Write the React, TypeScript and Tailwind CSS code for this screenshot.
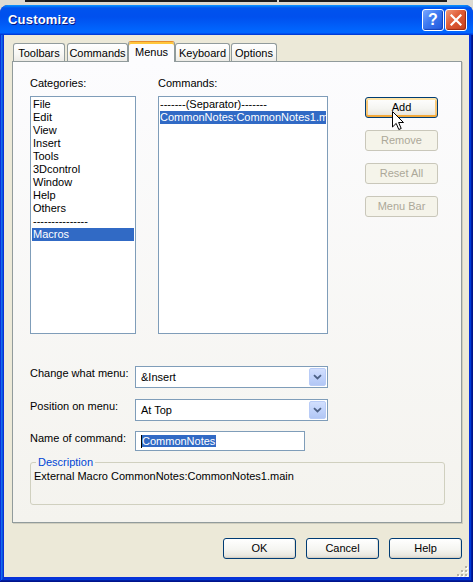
import React from "react";

function XPButton({
  children,
  disabled = false,
  hot = false,
}: {
  children: React.ReactNode;
  disabled?: boolean;
  hot?: boolean;
}) {
  if (disabled) {
    return (
      <div className="w-[73px] h-[21px] rounded-[3px] border border-[#C9C7BA] bg-[#F5F4EA] text-[#ACA899] flex items-center justify-center">
        {children}
      </div>
    );
  }
  return (
    <div
      className={`w-[73px] h-[21px] rounded-[3px] border border-[#003C74] bg-[linear-gradient(#FFFFFF,#F5F5F1_55%,#EAE8E0_85%,#DCD8CE)] flex items-center justify-center ${
        hot
          ? "shadow-[inset_0_2px_0_#FFE5A8,inset_0_-2px_0_#F2A93A,inset_2px_0_0_#F9C878,inset_-2px_0_0_#F9C878]"
          : "shadow-[inset_0_-1px_0_#D6D0C5,inset_-1px_0_0_#E3E1D8]"
      }`}
    >
      {children}
    </div>
  );
}

function Tab({
  label,
  w,
  selected = false,
  ml = "",
}: {
  label: string;
  w: string;
  selected?: boolean;
  ml?: string;
}) {
  if (selected) {
    return (
      <div
        className={`relative z-10 ${w} ${ml} h-[21px] -mb-[1px] border border-b-0 border-[#919B9C] border-t-[#E68B2C] rounded-t-[3px] bg-[#FCFCFE] shadow-[inset_0_2px_0_#FFC73C] flex justify-center pt-[4px]`}
      >
        {label}
      </div>
    );
  }
  return (
    <div
      className={`${w} ${ml} h-[18px] border border-b-0 border-[#919B9C] rounded-t-[3px] bg-[linear-gradient(#FFFFFF,#F7F7F4_60%,#ECEBE6)] flex justify-center pt-[3px]`}
    >
      {label}
    </div>
  );
}

function ListBox({
  items,
  selected,
  w,
  textPl,
}: {
  items: string[];
  selected: number;
  w: string;
  textPl: string;
}) {
  return (
    <div
      className={`${w} h-[238px] border border-[#7F9DB9] bg-white pt-[1px] px-[1px] overflow-hidden`}
    >
      {items.map((it, i) => (
        <div
          key={i}
          className={`h-[13px] leading-[13px] whitespace-nowrap overflow-hidden ${textPl} ${
            i === selected ? "bg-[#316AC5] text-white" : ""
          }`}
        >
          {it}
        </div>
      ))}
    </div>
  );
}

function Combo({ value }: { value: string }) {
  return (
    <div className="w-[193px] h-[22px] border border-[#7F9DB9] bg-white flex items-center">
      <div className="flex-1 pl-[5px] whitespace-nowrap">{value}</div>
      <div className="w-[17px] h-[18px] mr-[1px] rounded-[2px] border border-[#B9CCF7] bg-[linear-gradient(#D2DFFD,#C1D3FB_50%,#B2C7F5)] flex items-center justify-center">
        <svg width="9" height="6" viewBox="0 0 9 6">
          <path
            d="M1 1.2 L4.5 4.5 L8 1.2"
            fill="none"
            stroke="#4D6185"
            strokeWidth="1.8"
          />
        </svg>
      </div>
    </div>
  );
}

function TitleBar() {
  return (
    <div className="h-[30px] shrink-0 flex items-center pl-[8px] pr-[6px] bg-[linear-gradient(180deg,#0997FF,#0053EE_10%,#0050EE_40%,#0066FF_86%,#0066FF_92%,#005BFF_94%,#003DD7_97%,#003DD7)]">
      <div className="flex-1 text-white font-bold text-[13px] leading-[16px] [text-shadow:1px_1px_#0A1883] tracking-[0.2px]">
        Customize
      </div>
      <div className="flex gap-[1px]">
        <div className="w-[22px] h-[22px] rounded-[3px] border border-white bg-[linear-gradient(135deg,#7AA8FF,#3D78F0_45%,#1F56DB)] shadow-[inset_-1px_-1px_1px_#1741B8] flex items-center justify-center text-white font-bold text-[16px] leading-[16px]">
          ?
        </div>
        <div className="w-[22px] h-[22px] rounded-[3px] border border-white bg-[linear-gradient(135deg,#F19878,#DF5A35_45%,#C6401E)] shadow-[inset_-1px_-1px_1px_#9E2A12] flex items-center justify-center">
          <svg width="12" height="12" viewBox="0 0 12 12">
            <path
              d="M1.5 1.5 L10.5 10.5 M10.5 1.5 L1.5 10.5"
              stroke="white"
              strokeWidth="2.2"
              strokeLinecap="square"
            />
          </svg>
        </div>
      </div>
    </div>
  );
}

function Grip() {
  const dots: [number, number][] = [
    [9, 1],
    [5, 5],
    [9, 5],
    [1, 9],
    [5, 9],
    [9, 9],
  ];
  return (
    <svg width="12" height="12" viewBox="0 0 12 12">
      {dots.map(([x, y], i) => (
        <g key={i}>
          <rect x={x + 1} y={y + 1} width="2" height="2" fill="#FFFFFF" />
          <rect x={x} y={y} width="2" height="2" fill="#B5B2A6" />
        </g>
      ))}
    </svg>
  );
}

export default function App() {
  const categories = [
    "File",
    "Edit",
    "View",
    "Insert",
    "Tools",
    "3Dcontrol",
    "Window",
    "Help",
    "Others",
    "---------------",
    "Macros",
  ];
  const commands = [
    "-------(Separator)-------",
    "CommonNotes:CommonNotes1.main",
  ];

  return (
    <div className="relative w-[473px] h-[582px] flex flex-col bg-[#DCDAD2] font-['Liberation_Sans',Arial,sans-serif] text-[11px] leading-[13px] text-black overflow-hidden">
      {/* background strip behind window */}
      <div className="h-[5px] shrink-0 relative">
        <div className="absolute left-[25px] w-[252px] top-0 h-[2px] bg-[#1C1C1C]" />
        <div className="absolute left-[279px] w-[168px] top-0 h-[2px] bg-[#1C1C1C]" />
      </div>

      {/* window */}
      <div className="flex-1 flex flex-col rounded-t-[8px] overflow-hidden bg-[#0831D9]">
        <TitleBar />
        <div className="flex-1 flex flex-col px-[4px] pb-[5px] shadow-[inset_-1px_-1px_#00138C,inset_1px_0_#0831D9,inset_-2px_-2px_#001EA0,inset_2px_0_#166AEE,inset_-3px_-3px_#003BDA,inset_3px_0_#0855DD]">
          <div className="relative flex-1 bg-[#ECE9D8] flex flex-col pt-[6px] pl-[8px] pr-[7px]">
            {/* tabs */}
            <div className="h-[20px] flex items-end">
              <Tab label="Toolbars" w="w-[52px]" ml="ml-[1px]" />
              <Tab label="Commands" w="w-[61px]" ml="ml-[2px]" />
              <Tab label="Menus" w="w-[47px]" selected />
              <Tab label="Keyboard" w="w-[55px]" />
              <Tab label="Options" w="w-[46px]" ml="ml-[1px]" />
            </div>

            {/* tab panel */}
            <div className="w-[450px] h-[462px] border border-[#919B9C] bg-[linear-gradient(#FCFCFE,#F4F3EE)] shadow-[1px_1px_0_#D0CEBF] pt-[15px] pl-[17px] flex flex-col">
              <div className="flex">
                <div className="w-[106px]">
                  <div className="h-[13px]">Categories:</div>
                  <div className="mt-[6px]">
                    <ListBox
                      items={categories}
                      selected={10}
                      w="w-[106px]"
                      textPl="pl-[1px]"
                    />
                  </div>
                </div>
                <div className="ml-[22px] w-[170px]">
                  <div className="h-[13px]">Commands:</div>
                  <div className="mt-[6px]">
                    <ListBox
                      items={commands}
                      selected={1}
                      w="w-[170px]"
                      textPl="pl-0"
                    />
                  </div>
                </div>
                <div className="ml-[37px] pt-[20px] flex flex-col gap-[12px]">
                  <XPButton hot>Add</XPButton>
                  <XPButton disabled>Remove</XPButton>
                  <XPButton disabled>Reset All</XPButton>
                  <XPButton disabled>Menu Bar</XPButton>
                </div>
              </div>

              <div className="mt-[32px] flex items-start">
                <div className="w-[105px] pt-[1px]">Change what menu:</div>
                <Combo value="&Insert" />
              </div>
              <div className="mt-[11px] flex items-start">
                <div className="w-[105px] pt-[1px]">Position on menu:</div>
                <Combo value="At Top" />
              </div>
              <div className="mt-[10px] flex items-start">
                <div className="w-[105px] pt-[1px]">Name of command:</div>
                <div className="w-[170px] h-[20px] border border-[#7F9DB9] bg-white flex items-center pl-[5px]">
                  <div className="w-[1px] h-[13px] bg-black" />
                  <span className="bg-[#316AC5] text-white leading-[12px] pr-[1px]">
                    CommonNotes
                  </span>
                </div>
              </div>

              <fieldset className="mt-[5px] w-[415px] h-[49px] border border-[#D0D0BF] rounded-[3px] px-[3px]">
                <legend className="ml-[2px] px-[2px] text-[#0046D5] leading-[13px]">
                  Description
                </legend>
                <div className="mt-[1px]">
                  External Macro CommonNotes:CommonNotes1.main
                </div>
              </fieldset>
            </div>

            {/* bottom buttons */}
            <div className="mt-[15px] flex justify-end gap-[10px]">
              <XPButton>OK</XPButton>
              <XPButton>Cancel</XPButton>
              <XPButton>Help</XPButton>
            </div>

            <div className="absolute right-[1px] bottom-[0px]">
              <Grip />
            </div>
          </div>
        </div>
      </div>

      {/* mouse cursor */}
      <svg
        className="absolute left-[392px] top-[111px]"
        width="13"
        height="20"
        viewBox="0 0 13 20"
      >
        <path
          d="M0.5 0.5 L0.5 16 L4.2 12.4 L6.8 18.5 L9.2 17.5 L6.6 11.5 L11.5 11.5 Z"
          fill="white"
          stroke="black"
          strokeWidth="1"
          strokeLinejoin="miter"
        />
      </svg>
    </div>
  );
}
